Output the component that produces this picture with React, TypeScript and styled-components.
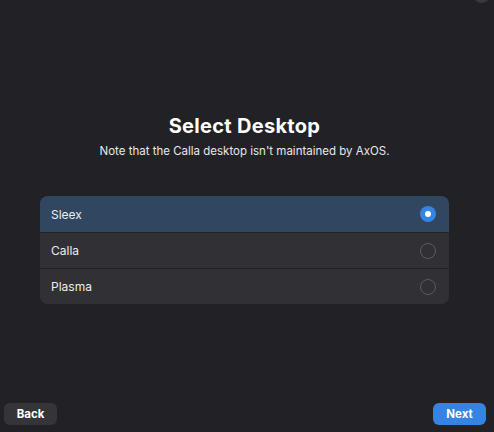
import React, { useState } from "react";
import styled, { createGlobalStyle } from "styled-components";

const GlobalStyle = createGlobalStyle`
  html, body {
    margin: 0;
    padding: 0;
    background: #222226;
  }
  * {
    box-sizing: border-box;
  }
`;

const Window = styled.div`
  position: relative;
  width: 494px;
  height: 432px;
  display: flex;
  flex-direction: column;
  background: #222226;
  color: #ffffff;
  font-family: Inter, "Noto Sans", sans-serif;
  overflow: hidden;
`;

const CornerButton = styled.div`
  position: absolute;
  top: -14px;
  right: 4px;
  width: 17px;
  height: 17px;
  border-radius: 50%;
  background: #3a3a3e;
`;

const Page = styled.main`
  flex: 1;
  display: flex;
  flex-direction: column;
  align-items: center;
  padding: 113px 5px 0 0;
`;

const Title = styled.h1`
  margin: 0;
  font-size: 20px;
  line-height: 26px;
  font-weight: 700;
  letter-spacing: 0.3px;
`;

const Subtitle = styled.p`
  margin: 4px 0 0;
  font-size: 11.5px;
  line-height: 16px;
  color: #e8e8ea;
`;

const List = styled.div`
  margin-top: 37px;
  width: 409px;
  display: flex;
  flex-direction: column;
  border-radius: 8px;
  overflow: hidden;
  background: #303035;
`;

const Row = styled.button<{ $selected: boolean }>`
  display: flex;
  align-items: center;
  justify-content: space-between;
  height: 36px;
  padding: 0 13px 0 11px;
  border: none;
  border-top: 1px solid #232327;
  background: ${(p) => (p.$selected ? "#314761" : "#303035")};
  color: #ececef;
  font-family: inherit;
  font-size: 12px;
  text-align: left;
  cursor: pointer;

  &:first-child {
    border-top: none;
  }
`;

const Radio = styled.span<{ $checked: boolean }>`
  width: 16px;
  height: 16px;
  border-radius: 50%;
  display: flex;
  align-items: center;
  justify-content: center;
  background: ${(p) => (p.$checked ? "#3584e4" : "transparent")};
  border: ${(p) => (p.$checked ? "none" : "1.5px solid #5a5a5f")};

  &::after {
    content: "";
    display: ${(p) => (p.$checked ? "block" : "none")};
    width: 6px;
    height: 6px;
    border-radius: 50%;
    background: #ffffff;
  }
`;

const Footer = styled.footer`
  display: flex;
  justify-content: space-between;
  padding: 0 8px 7px 4px;
`;

const NavButton = styled.button<{ $primary?: boolean }>`
  height: 22px;
  min-width: 53px;
  padding: 0 12px;
  border: none;
  border-radius: 6px;
  background: ${(p) => (p.$primary ? "#3584e4" : "#353539")};
  color: #ffffff;
  font-family: inherit;
  font-size: 11.5px;
  font-weight: 700;
  cursor: pointer;
`;

const desktops = ["Sleex", "Calla", "Plasma"];

const App = () => {
  const [selected, setSelected] = useState<string>("Sleex");

  return (
    <>
      <GlobalStyle />
      <Window>
        <CornerButton />
        <Page>
          <Title>Select Desktop</Title>
          <Subtitle>Note that the Calla desktop isn't maintained by AxOS.</Subtitle>
          <List>
            {desktops.map((name) => (
              <Row
                key={name}
                $selected={selected === name}
                onClick={() => setSelected(name)}
              >
                {name}
                <Radio $checked={selected === name} />
              </Row>
            ))}
          </List>
        </Page>
        <Footer>
          <NavButton>Back</NavButton>
          <NavButton $primary>Next</NavButton>
        </Footer>
      </Window>
    </>
  );
};

export default App;
